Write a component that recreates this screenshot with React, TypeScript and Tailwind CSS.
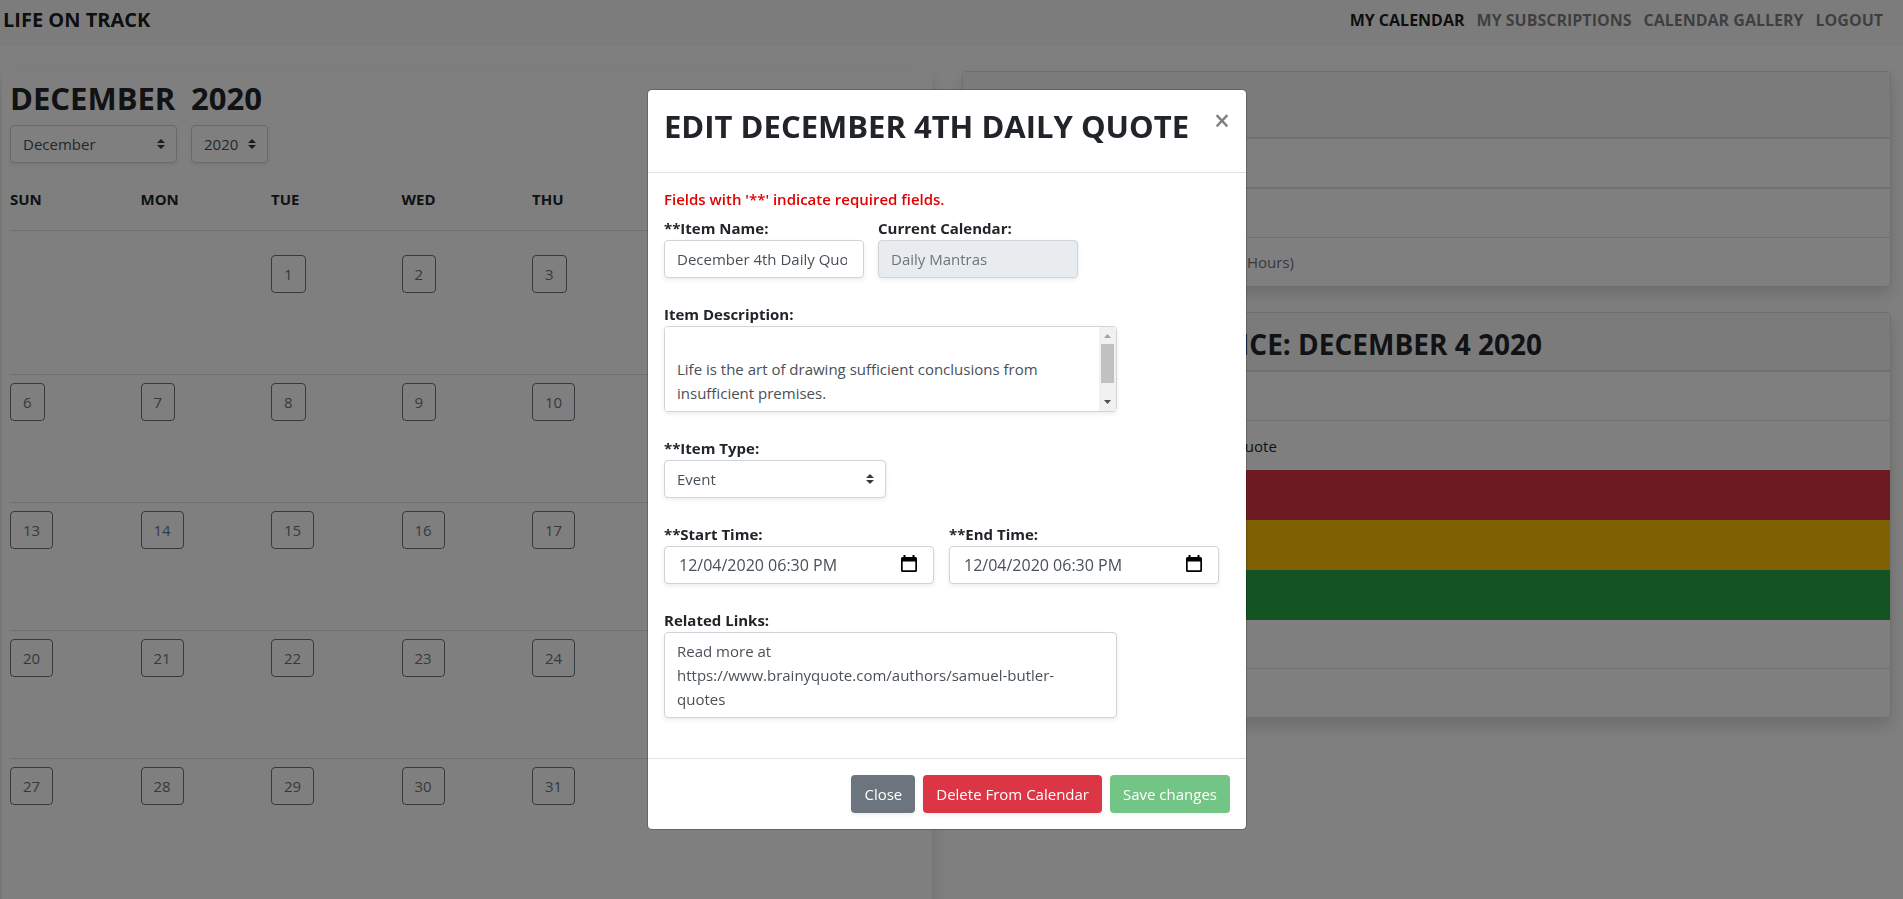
import { useState, type ReactNode, type SelectHTMLAttributes } from "react";

const NAV = ["My Calendar", "My Subscriptions", "Calendar Gallery", "Logout"];
const DAYS = ["Sun", "Mon", "Tue", "Wed", "Thu", "Fri", "Sat"];
const WEEKS: (number | null)[][] = [
  [null, null, 1, 2, 3, 4, 5],
  [6, 7, 8, 9, 10, 11, 12],
  [13, 14, 15, 16, 17, 18, 19],
  [20, 21, 22, 23, 24, 25, 26],
  [27, 28, 29, 30, 31, null, null],
];

const FIELD =
  "rounded border border-[#ced4da] bg-white pl-3 text-[#495057] shadow-[0_2px_4px_rgba(0,0,0,0.075)] outline-none";

function Select({
  className,
  children,
  ...rest
}: SelectHTMLAttributes<HTMLSelectElement> & { className: string }) {
  return (
    <div className={`relative ${className}`}>
      <select {...rest} className={`${FIELD} h-[38px] w-full appearance-none pr-6`}>
        {children}
      </select>
      <svg
        viewBox="0 0 4 5"
        className="pointer-events-none absolute top-[14px] right-3 h-[10px] w-2"
        fill="#343a40"
        aria-hidden="true"
      >
        <path d="M2 0L0 2h4zm0 5L0 3h4z" />
      </svg>
    </div>
  );
}

function Navbar() {
  return (
    <header className="flex h-[46px] items-center justify-between bg-[#f8f9fa] pr-5 pb-[6px] pl-[3px] font-bold uppercase">
      <a href="#home" className="text-xl text-black/90">
        Life on Track
      </a>
      <nav className="flex gap-3 text-base">
        {NAV.map((item, i) => (
          <a key={item} href="#" className={i === 0 ? "text-black/90" : "text-black/50"}>
            {item}
          </a>
        ))}
      </nav>
    </header>
  );
}

function Calendar() {
  return (
    <section className="px-2 pt-2 pb-8 shadow-[0_8px_16px_rgba(0,0,0,0.15)]">
      <div className="flex gap-[14px]">
        <div className="w-[167px]">
          <h2 className="mb-2 text-[31px] leading-[38px] font-bold uppercase">December</h2>
          <Select className="w-full" aria-label="Month" defaultValue="December">
            <option>December</option>
          </Select>
        </div>
        <div className="w-[77px]">
          <h2 className="mb-2 text-[31px] leading-[38px] font-bold">2020</h2>
          <Select className="w-full" aria-label="Year" defaultValue="2020">
            <option>2020</option>
          </Select>
        </div>
      </div>
      <table className="mt-6 w-full table-fixed text-left">
        <thead>
          <tr className="h-[43px] border-b border-[#dee2e6] align-top">
            {DAYS.map((d) => (
              <th key={d} className="font-bold uppercase">
                {d}
              </th>
            ))}
          </tr>
        </thead>
        <tbody>
          {WEEKS.map((week, w) => (
            <tr
              key={w}
              className={`border-b border-[#dee2e6] align-top last:border-b-0 ${w === 0 ? "h-[144px]" : "h-[128px]"}`}
            >
              {week.map((day, i) => (
                <td key={i} className={w === 0 ? "pt-6" : "pt-2"}>
                  {day !== null && (
                    <button
                      type="button"
                      className="h-[38px] rounded border border-[#6c757d] px-3 text-[#6c757d]"
                    >
                      {day}
                    </button>
                  )}
                </td>
              ))}
            </tr>
          ))}
        </tbody>
      </table>
    </section>
  );
}

function Panel({ children }: { children: ReactNode }) {
  return (
    <section className="rounded border border-[#dfdfdf] bg-white shadow-[0_8px_16px_rgba(0,0,0,0.15)]">
      {children}
    </section>
  );
}

function Sidebar() {
  return (
    <div className="flex flex-col gap-[25px]">
      <Panel>
        <div className="h-[65px] bg-[#f7f7f7]" />
        <div className="h-[50px] border-t-2 border-[#dee2e6]" />
        <div className="h-[50px] border-t-2 border-[#dee2e6]" />
        <div className="flex h-[49px] items-center border-t border-[#dee2e6] pl-[259px] text-[#6c757d]">
          (24 Hours)
        </div>
      </Panel>
      <Panel>
        <h3 className="flex h-[57px] items-center bg-[#f7f7f7] pt-1 pl-7 text-[28px] font-bold whitespace-nowrap uppercase">
          Events at a Glance: December 4 2020
        </h3>
        <div className="h-[50px] border-t-2 border-[#dee2e6]" />
        <div className="flex h-[50px] items-center border-t border-[#dee2e6] pl-[129px]">
          December 4th Daily Quote
        </div>
        <div className="h-[50px] bg-[#dc3545]" />
        <div className="h-[50px] bg-[#ffc107]" />
        <div className="h-[50px] bg-[#28a745]" />
        <div className="h-[48px]" />
        <div className="h-[49px] border-t border-[#dee2e6]" />
      </Panel>
    </div>
  );
}

function Field({ id, label, children }: { id: string; label: string; children: ReactNode }) {
  return (
    <div>
      <label htmlFor={id} className="block font-bold">
        {label}
      </label>
      {children}
    </div>
  );
}

function DateField({ id, label }: { id: string; label: string }) {
  const [value, setValue] = useState("12/04/2020 06:30 PM");
  return (
    <Field id={id} label={label}>
      <div className={`${FIELD} flex h-[38px] w-[270px] items-center pr-4`}>
        <input
          id={id}
          className="min-w-0 flex-1 pl-[2px] text-base outline-none"
          value={value}
          onChange={(e) => setValue(e.target.value)}
        />
        <button type="button" aria-label="Open calendar">
          <svg viewBox="0 0 16 18" className="mb-[3px] h-[18px] w-4" aria-hidden="true">
            <path
              fillRule="evenodd"
              d="M2.5 0h2v2h7V0h2v2H14.500A1.500 1.500 0 0 1 16 3.500V15.500A1.500 1.500 0 0 1 14.500 17H1.500A1.500 1.500 0 0 1 0 15.500V3.500A1.500 1.500 0 0 1 1.500 2H2.500zM1.700 6.500V15.300H14.300V6.500z"
            />
          </svg>
        </button>
      </div>
    </Field>
  );
}

function ScrollTrack() {
  return (
    <div
      className="pointer-events-none absolute inset-y-px right-px flex w-[17px] flex-col items-center rounded-r-[3px] bg-[#f1f1f1]"
      aria-hidden="true"
    >
      <svg viewBox="0 0 17 17" className="size-[17px]" fill="#a3a3a3">
        <path d="M5 11h7L8.500 7z" />
      </svg>
      <div className="h-[39px] w-[13px] bg-[#c1c1c1]" />
      <svg viewBox="0 0 17 17" className="mt-auto size-[17px]" fill="#505050">
        <path d="M5 6h7L8.500 10z" />
      </svg>
    </div>
  );
}

function EditDialog() {
  const [name, setName] = useState("December 4th Daily Quote");
  const [description, setDescription] = useState(
    "\nLife is the art of drawing sufficient conclusions from insufficient premises.\n",
  );
  const [links, setLinks] = useState(
    "Read more at https://www.brainyquote.com/authors/samuel-butler-quotes",
  );

  return (
    <div className="fixed inset-0 flex items-start justify-center bg-black/50 pt-[89px] pr-[9px]">
      <div
        role="dialog"
        aria-modal="true"
        aria-labelledby="dialog-title"
        className="w-[600px] rounded-[5px] border border-black/20 bg-white bg-clip-padding"
      >
        <div className="flex h-[83px] items-start justify-between border-b border-[#dee2e6] px-4 pt-4">
          <h1 id="dialog-title" className="text-[31px] leading-10 font-bold whitespace-nowrap uppercase">
            Edit December 4th Daily Quote
          </h1>
          <button type="button" className="pt-[2px] text-[28px] leading-6 font-semibold text-black/50" aria-label="Dismiss">
            ×
          </button>
        </div>
        <div className="flex flex-col gap-6 px-4 pt-[14px] pb-10">
          <div>
            <p className="mb-[5px] font-semibold text-[#e00000]">
              Fields with '**' indicate required fields.
            </p>
            <div className="flex gap-[14px]">
              <Field id="name" label="**Item Name:">
                <input
                  id="name"
                  className={`${FIELD} h-[38px] w-[200px] pr-4`}
                  value={name}
                  onChange={(e) => setName(e.target.value)}
                />
              </Field>
              <Field id="calendar" label="Current Calendar:">
                <input
                  id="calendar"
                  disabled
                  className="h-[38px] w-[200px] rounded border border-[#ced4da] bg-[#e9ecef] px-3 text-[#6c757d] shadow-[0_2px_4px_rgba(0,0,0,0.075)]"
                  value="Daily Mantras"
                />
              </Field>
            </div>
          </div>
          <Field id="description" label="Item Description:">
            <div className="relative w-[453px]">
              <textarea
                id="description"
                className={`${FIELD} block h-[86px] w-full resize-none overflow-y-auto py-[6px] pr-[29px] leading-6`}
                value={description}
                onChange={(e) => setDescription(e.target.value)}
              />
              <ScrollTrack />
            </div>
          </Field>
          <Field id="type" label="**Item Type:">
            <Select id="type" className="w-[222px]" defaultValue="Event">
              <option>Event</option>
            </Select>
          </Field>
          <div className="flex gap-[15px]">
            <DateField id="start" label="**Start Time:" />
            <DateField id="end" label="**End Time:" />
          </div>
          <Field id="links" label="Related Links:">
            <textarea
              id="links"
              className={`${FIELD} block h-[86px] w-[453px] resize-none overflow-hidden py-[6px] pr-[29px] leading-6`}
              value={links}
              onChange={(e) => setLinks(e.target.value)}
            />
          </Field>
        </div>
        <div className="flex justify-end gap-2 border-t border-[#dee2e6] p-4 text-white">
          <button type="button" className="h-[38px] rounded bg-[#6c757d] px-[13px] shadow-[0_2px_4px_rgba(0,0,0,0.075)]">
            Close
          </button>
          <button type="button" className="h-[38px] rounded bg-[#dc3545] px-[13px] shadow-[0_2px_4px_rgba(0,0,0,0.075)]">
            Delete From Calendar
          </button>
          <button type="button" disabled className="h-[38px] rounded bg-[#28a745] px-[13px] opacity-65 shadow-[0_2px_4px_rgba(0,0,0,0.075)]">
            Save changes
          </button>
        </div>
      </div>
    </div>
  );
}

export default function App() {
  return (
    <div className="h-screen overflow-hidden bg-white font-['Open_Sans','Noto_Sans',sans-serif] text-[15px] leading-6 text-[#212529]">
      <Navbar />
      <main className="grid grid-cols-2 items-start gap-[30px] pt-[25px] pr-3 pl-[2px]">
        <Calendar />
        <Sidebar />
      </main>
      <EditDialog />
    </div>
  );
}
